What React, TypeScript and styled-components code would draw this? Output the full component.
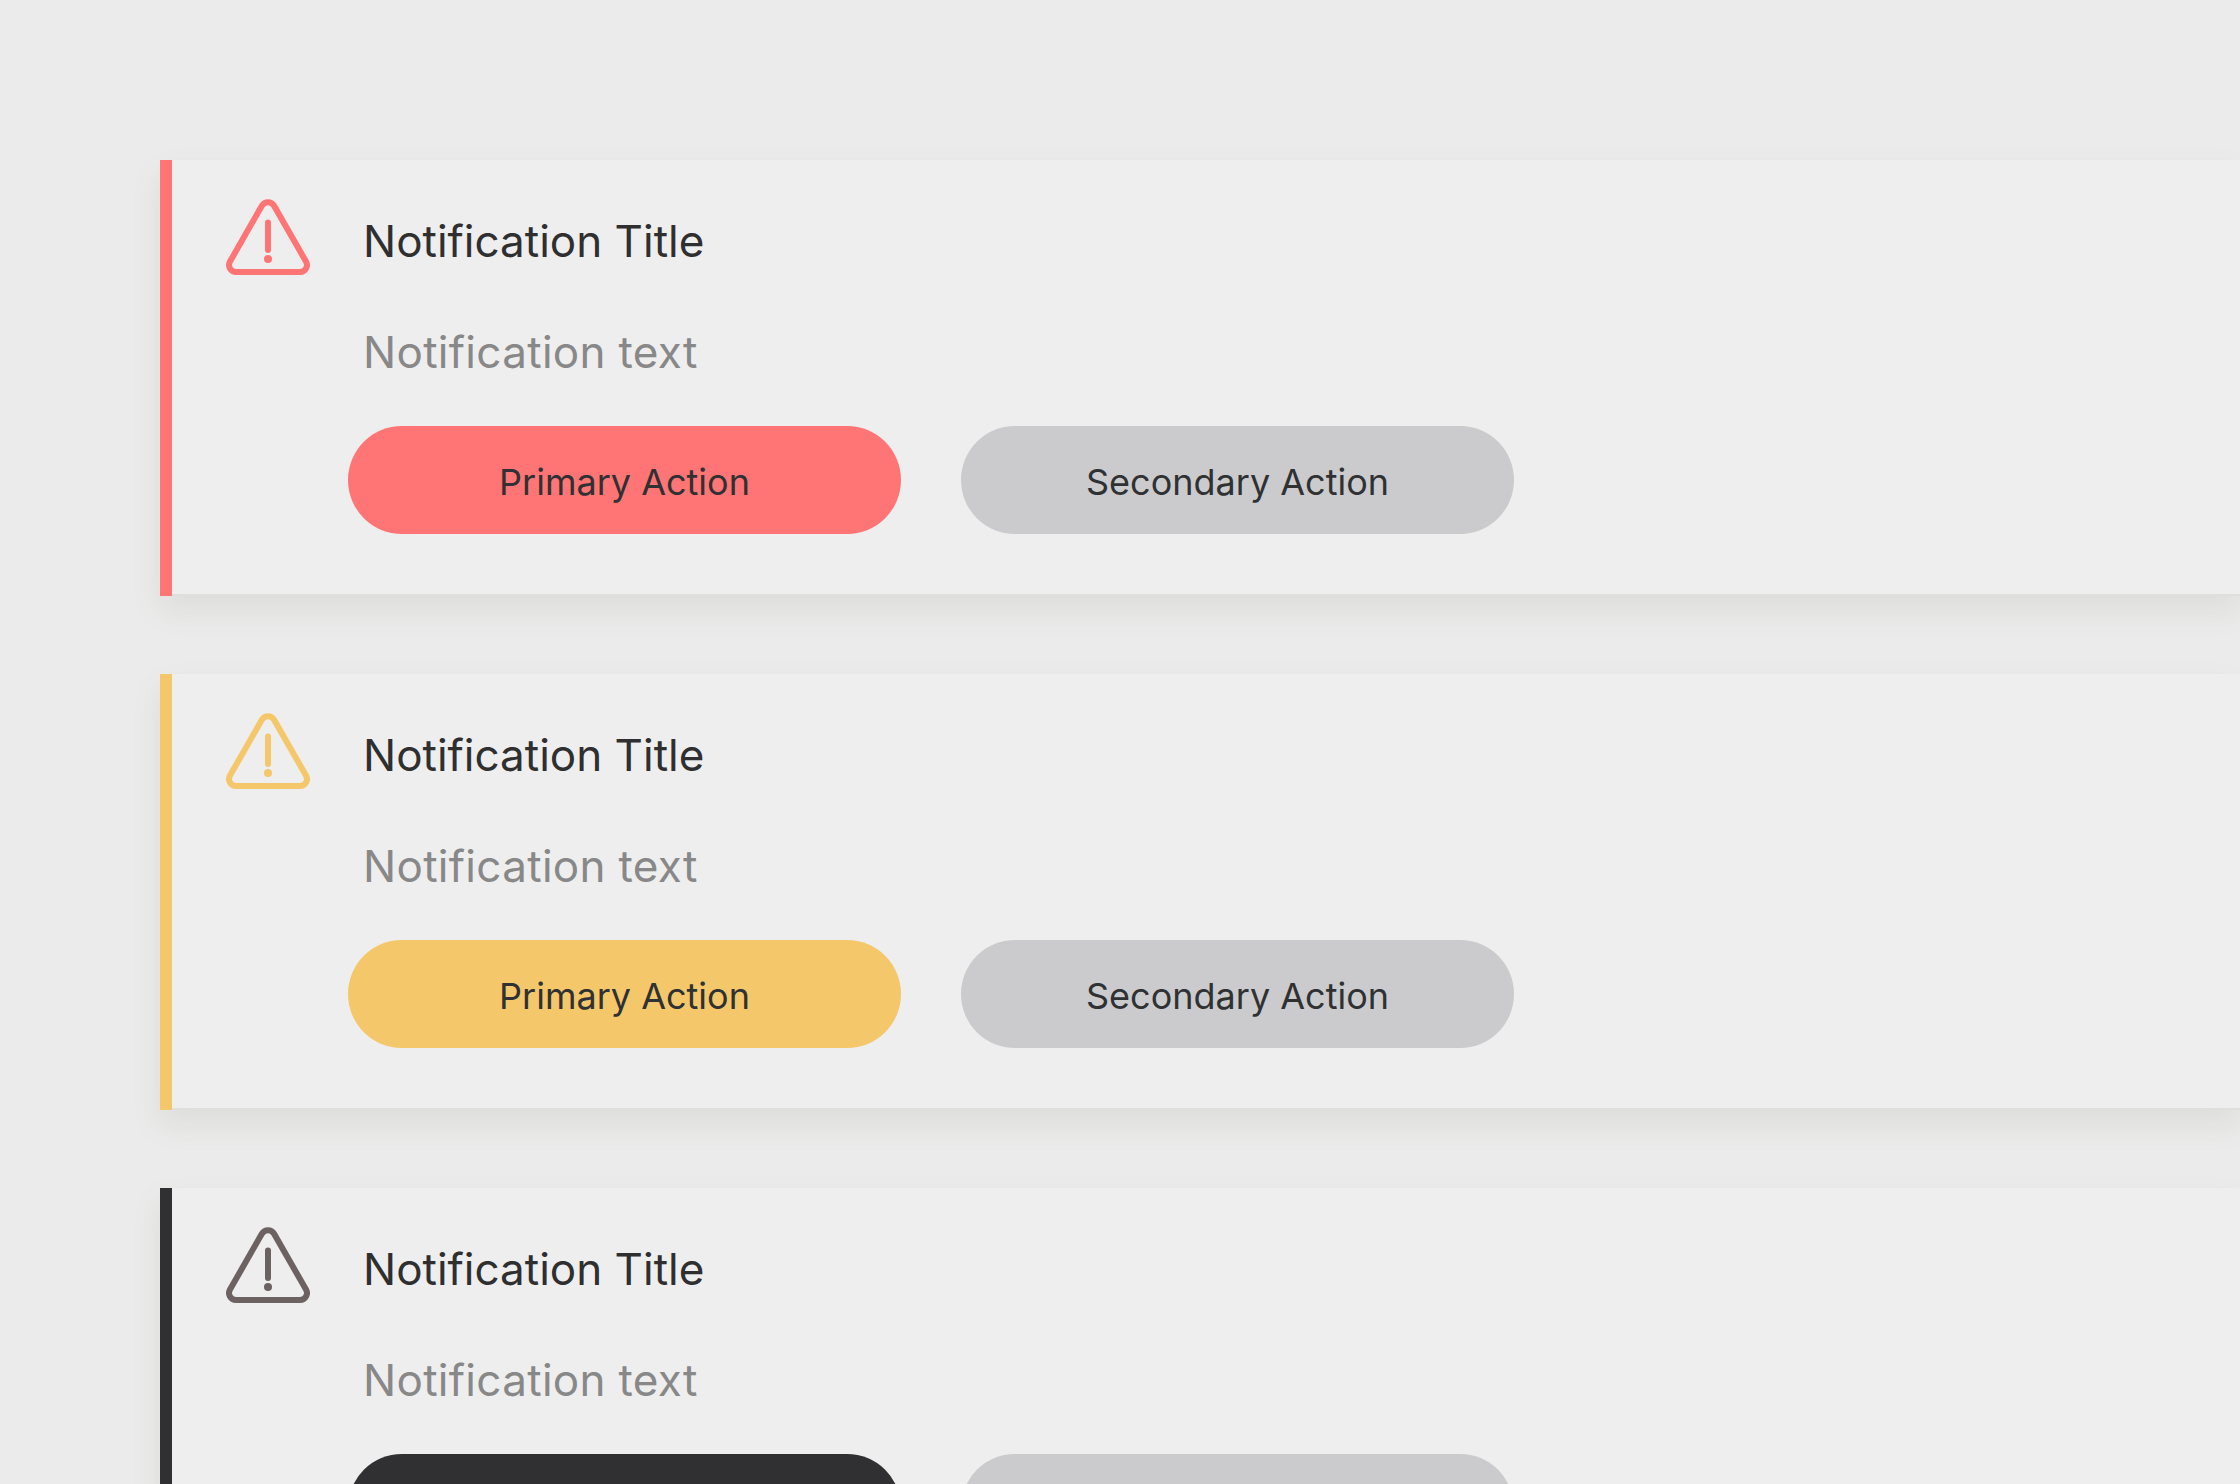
import React from 'react';
import styled, { createGlobalStyle } from 'styled-components';

const GlobalStyle = createGlobalStyle`
    html, body {
        margin: 0;
        height: 100%;
        overflow: hidden;
        background-color: #ebebeb;
        font-family: Inter, "Noto Sans", sans-serif;
    }
`;

const Page = styled.div`
    display: flex;
    flex-direction: column;
    gap: 78px;
    height: 1484px;
    padding: 160px 0 0 160px;
    box-sizing: border-box;
    overflow: hidden;
`;

const Card = styled.section`
    display: flex;
    align-items: flex-start;
    flex-shrink: 0;
    background-color: #e0dfdd;
    box-shadow: 0 14px 28px rgba(110, 105, 95, 0.11);
`;

const Accent = styled.div<{ $color: string }>`
    width: 12px;
    height: 436px;
    flex-shrink: 0;
    background-color: ${props => props.$color};
`;

const Panel = styled.div`
    flex: 1;
    height: 434px;
    padding: 39px 0 0 54px;
    box-sizing: border-box;
    background-color: #eeeeee;
`;

const Header = styled.div`
    display: flex;
    align-items: center;
    gap: 53px;
    height: 76px;
`;

const Title = styled.h2`
    margin: 8px 0 0;
    font-size: 44px;
    font-weight: 400;
    line-height: 52px;
    color: #2f2f2f;
`;

const Text = styled.p`
    margin: 51px 0 0 137px;
    font-size: 44px;
    letter-spacing: 0.3px;
    line-height: 52px;
    color: #888888;
`;

const Actions = styled.div`
    display: flex;
    gap: 60px;
    margin: 48px 0 0 122px;
`;

const Button = styled.button<{ $color: string }>`
    width: 553px;
    height: 108px;
    padding: 3px 0 0;
    border: none;
    border-radius: 54px;
    background-color: ${props => props.$color};
    font-family: inherit;
    font-size: 36px;
    color: #2f3133;
`;

const Icon = ({ color }: { color: string }) => (
    <svg width="84" height="76" viewBox="0 0 84 76" fill="none" stroke={color} strokeWidth="6" strokeLinecap="round">
        <path d="M36 6.6a7 7 0 0 1 12 0L80 62.5a7 7 0 0 1-6 10.5H10A7 7 0 0 1 4 62.5z" />
        <path d="M42 23.5V51" strokeWidth="6" />
        <circle cx="42" cy="60" r="4" fill={color} stroke="none" />
    </svg>
);

const notifications = [
    { accent: '#ff7575', icon: '#ff7575' },
    { accent: '#f5c76b', icon: '#f5c76b' },
    { accent: '#303032', icon: '#6b6261' },
];

const App: React.FC = () => {
    return (
        <Page>
            <GlobalStyle />
            {notifications.map(item => (
                <Card key={item.accent}>
                    <Accent $color={item.accent} />
                    <Panel>
                        <Header>
                            <Icon color={item.icon} />
                            <Title>Notification Title</Title>
                        </Header>
                        <Text>Notification text</Text>
                        <Actions>
                            <Button $color={item.accent}>Primary Action</Button>
                            <Button $color="#cbcbcd">Secondary Action</Button>
                        </Actions>
                    </Panel>
                </Card>
            ))}
        </Page>
    );
};

export default App;
